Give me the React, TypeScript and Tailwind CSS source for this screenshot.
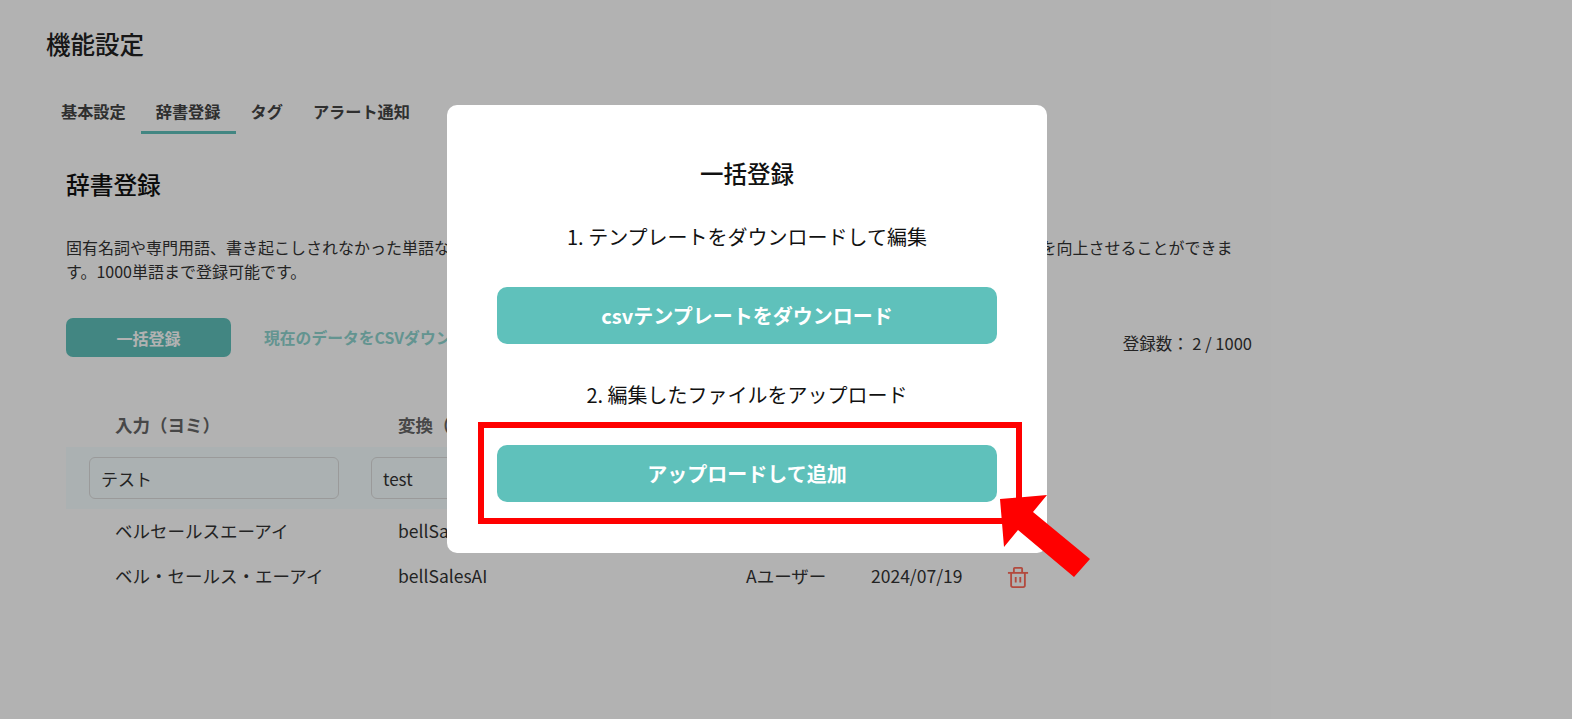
import React from "react";

const rows = [
  { yomi: "ベルセールスエーアイ", word: "bellSalesAI", user: "Aユーザー", date: "2024/07/19" },
  { yomi: "ベル・セールス・エーアイ", word: "bellSalesAI", user: "Aユーザー", date: "2024/07/19" },
];

const TrashIcon = () => (
  <svg width="22" height="22" viewBox="0 0 24 24" fill="none" stroke="#ff6a59" strokeWidth="2" strokeLinejoin="round">
    <path d="M1 7.5h22" />
    <path d="M7.5 7V3a1 1 0 0 1 1-1h7a1 1 0 0 1 1 1v4" />
    <path d="M4.5 7.5v13.5a2 2 0 0 0 2 2h11a2 2 0 0 0 2-2V7.5" />
    <path d="M9.5 12v6M14.5 12v6" />
  </svg>
);

const App = () => {
  return (
    <div className="relative h-screen overflow-hidden bg-white text-[#222222] font-['Noto_Sans_CJK_JP','Noto_Sans',sans-serif]">
      <div className="pl-[46px] pt-[26px]">
        <h1 className="text-[24.5px] leading-[36px] font-medium">機能設定</h1>
        <div className="mt-[32px] flex text-[16.2px] font-bold text-[#444444]">
          <div className="h-[40px] px-[15px] pt-[5px]">基本設定</div>
          <div className="h-[40px] px-[15px] pt-[5px] border-b-[3px] border-[#5fc1bb]">辞書登録</div>
          <div className="h-[40px] px-[15px] pt-[5px]">タグ</div>
          <div className="h-[40px] px-[15px] pt-[5px]">アラート通知</div>
        </div>

        <div className="pl-[20px]">
          <h2 className="mt-[32px] text-[23.7px] leading-[36px] font-medium text-[#111111]">辞書登録</h2>
          <p className="mt-[33px] w-[1170px] text-[16px] leading-[24px] text-[#333333]">
            固有名詞や専門用語、書き起こしされなかった単語などを辞書に登録していただくことで、次回以降の通話内容の書き起こしの認識精度を向上させることができます。1000単語まで登録可能です。
          </p>

          <div className="mt-[35px] flex w-[1186px] items-center">
            <button className="w-[165px] h-[39px] rounded-[7px] bg-[#5fc1bb] text-[16px] font-bold text-white">一括登録</button>
            <span className="ml-[33px] text-[15.8px] font-bold text-[#8ed4cf]">現在のデータをCSVダウンロード</span>
            <span className="ml-auto mt-[12px] text-[16.5px] text-[#333333]">登録数： 2 / 1000</span>
          </div>

          <div className="mt-[47px] flex h-[43px] items-center text-[17.5px] font-bold text-[#666666]">
            <div className="w-[282px] pl-[49px]">入力（ヨミ）</div>
            <div className="pl-[50px]">変換（カンジ）</div>
          </div>

          <div className="flex h-[62px] w-[960px] items-center bg-[#f5feff]">
            <div className="w-[282px] pl-[23px]">
              <input
                readOnly
                value="テスト"
                className="w-[250px] h-[42px] rounded-[6px] border border-[#dddddd] bg-transparent px-[11px] text-[17px] text-[#333333]"
              />
            </div>
            <div className="pl-[23px]">
              <input
                readOnly
                value="test"
                className="w-[250px] h-[42px] rounded-[6px] border border-[#dddddd] bg-transparent px-[11px] text-[17px] text-[#333333]"
              />
            </div>
          </div>

          {rows.map((row, i) => (
            <div key={i} className="flex h-[45px] items-center text-[17.5px] text-[#333333]">
              <div className="w-[282px] pl-[49px]">{row.yomi}</div>
              <div className="w-[375px] pl-[50px]">{row.word}</div>
              <div className="w-[125px] pl-[23px]">{row.user}</div>
              <div className="w-[159px] pl-[23px]">{row.date}</div>
              <TrashIcon />
            </div>
          ))}
        </div>
      </div>

      {/* モーダル */}
      <div className="absolute inset-0 bg-black/30 pl-[447px] pt-[105px]">
        <div className="flex h-[448px] w-[600px] flex-col items-center rounded-[10px] bg-white px-[50px] text-[#111111]">
          <h3 className="mt-[50px] text-[23.5px] leading-[36px] font-medium">一括登録</h3>
          <p className="mt-[31px] text-[20px] leading-[30px]">1. テンプレートをダウンロードして編集</p>
          <button className="mt-[35px] h-[57px] w-full rounded-[10px] bg-[#5fc1bb] text-[20px] font-bold text-white">
            csvテンプレートをダウンロード
          </button>
          <p className="mt-[36px] text-[20px] leading-[30px]">2. 編集したファイルをアップロード</p>
          <button className="mt-[35px] h-[57px] w-full rounded-[10px] bg-[#5fc1bb] text-[20px] font-bold text-white">
            アップロードして追加
          </button>
        </div>
      </div>

      {/* 注釈 */}
      <div className="absolute left-[478px] top-[422px] h-[102px] w-[544px] border-[6px] border-[#ff0000]" />
      <svg className="absolute left-0 top-0" width="1572" height="719">
        <polygon fill="#ff0000" points="1000,499 1047,495 1033,512 1090,559 1074,577 1018,530 1004,547" />
      </svg>
    </div>
  );
};

export default App;
